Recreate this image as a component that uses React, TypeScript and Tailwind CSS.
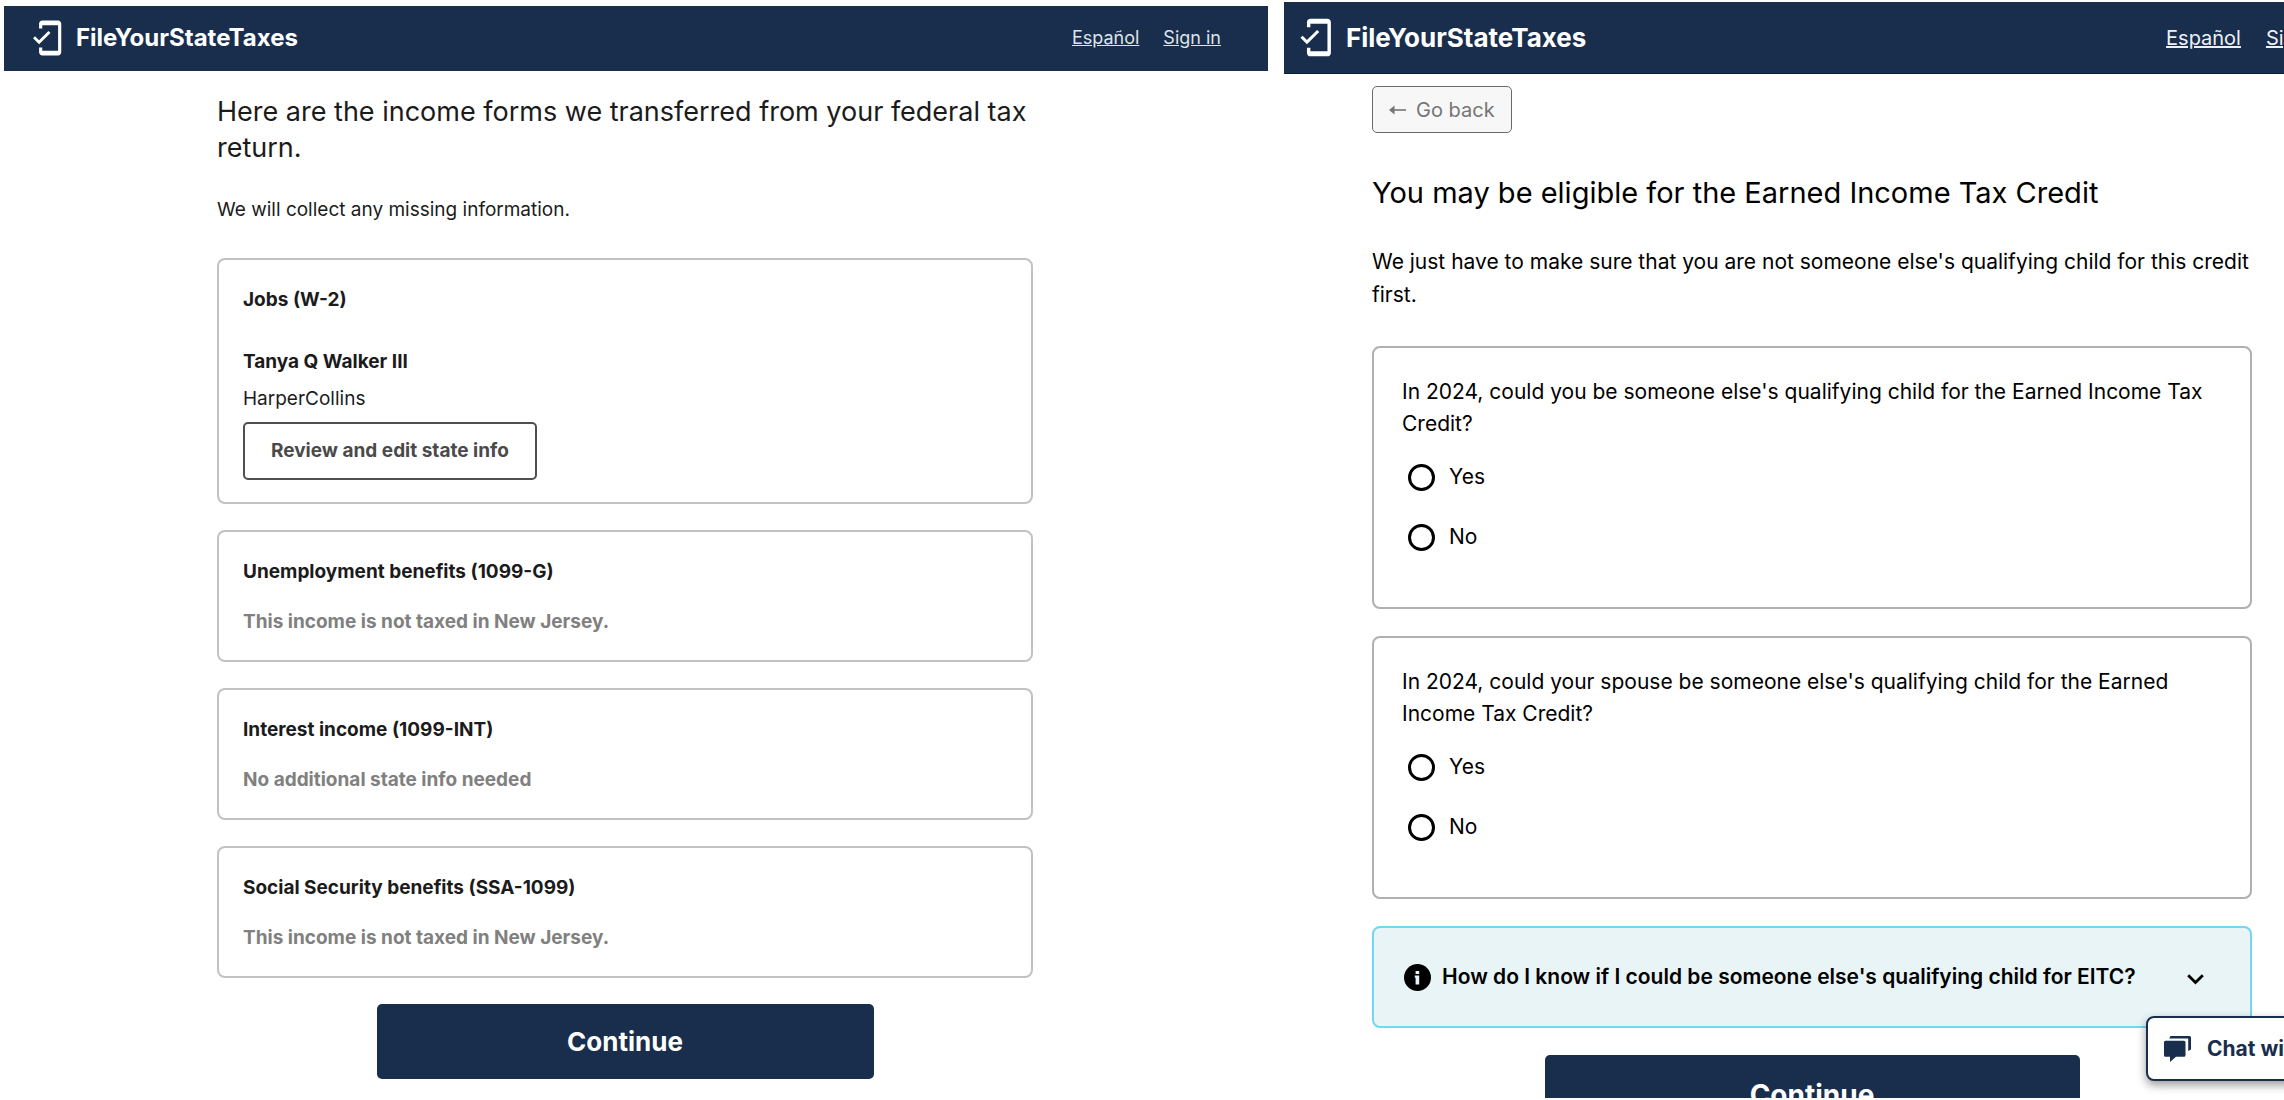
import { ReactNode } from 'react';
import { MdMobileFriendly } from 'react-icons/md';

interface IncomeForm {
  title: string;
  note: string;
}

const incomeForms: IncomeForm[] = [
  { title: 'Unemployment benefits (1099-G)', note: 'This income is not taxed in New Jersey.' },
  { title: 'Interest income (1099-INT)', note: 'No additional state info needed' },
  { title: 'Social Security benefits (SSA-1099)', note: 'This income is not taxed in New Jersey.' },
];

const ArrowLeft = () => (
  <svg width="17" height="12" viewBox="0 0 17 12" fill="none" aria-hidden="true">
    <path d="M3 6h14" stroke="currentColor" strokeWidth="1.6" />
    <path d="M0 6l5.500-4.500v9z" fill="currentColor" />
  </svg>
);

const InfoIcon = () => (
  <svg width="27" height="27" viewBox="0 0 27 27" className="shrink-0" aria-hidden="true">
    <circle cx="13.5" cy="13.5" r="13.5" fill="#000" />
    <path d="M11.600 7h3.600v3h-3.600zM10.800 11.600h4.400v9h-3.600v-6.800h-.8z" fill="#e8f4f6" />
  </svg>
);

const ChatIcon = () => (
  <svg width="27" height="26" viewBox="0 0 27 26" fill="#192e4d" className="shrink-0" aria-hidden="true">
    <path d="M1.500 4.700h18.500a1.500 1.500 0 0 1 1.500 1.500v13.100a1.500 1.500 0 0 1-1.500 1.500h-8L6 26v-5.200H1.500A1.500 1.500 0 0 1 0 19.300V6.200a1.500 1.500 0 0 1 1.500-1.500z" />
    <path d="M6.500 0H25.500A1.500 1.500 0 0 1 27 1.500V13.500L24.200 15V2.500H5.200z" />
  </svg>
);

interface QuestionProps {
  name: string;
  children: ReactNode;
}

const Question = ({ name, children }: QuestionProps) => (
  <fieldset className="mt-[27px] rounded-lg border-2 border-[#b0b0b0] px-7 pt-7 pb-[54px]">
    <legend className="float-left w-full text-[21px] leading-8">{children}</legend>
    <div className="clear-both flex flex-col gap-7 pt-[21px] pl-[6px]">
      {['Yes', 'No'].map((option) => (
        <label key={option} className="flex items-center gap-[14px] text-[21px] leading-8">
          <input
            type="radio"
            name={name}
            value={option}
            className="size-[27px] appearance-none rounded-full border-[3px] border-black bg-white checked:bg-[#192e4d]"
          />
          {option}
        </label>
      ))}
    </div>
  </fieldset>
);

const IncomeFormsScreen = () => (
  <section className="min-w-0 pt-[6px] text-[#1b1b1b]">
    <header className="flex h-[65px] items-center justify-between bg-[#192e4d] pr-[47px] pb-[2px] pl-6 text-white">
      <div className="flex items-center gap-[10px]">
        <MdMobileFriendly size={38} />
        <span className="text-[24px] leading-8 font-bold">FileYourStateTaxes</span>
      </div>
      <nav className="flex gap-6 text-[18px] leading-6 text-[#dfe3e8]">
        <a href="#" className="underline">Español</a>
        <a href="#" className="underline">Sign in</a>
      </nav>
    </header>

    <div className="pr-[22px]">
      <main className="mx-auto max-w-[816px]">
        <h1 className="mt-[23px] text-[27px] leading-9">
          Here are the income forms we transferred from your federal tax return.
        </h1>
        <p className="mt-[30px] text-[19px] leading-7">We will collect any missing information.</p>

        <div className="mt-[34px] rounded-lg border-2 border-[#c2c2c2] px-6 pt-[26px] pb-[22px]">
          <h2 className="text-[19px] leading-7 font-bold">Jobs (W-2)</h2>
          <h3 className="mt-[34px] text-[19px] leading-7 font-bold">Tanya Q Walker III</h3>
          <p className="mt-[9px] text-[19px] leading-7">HarperCollins</p>
          <button className="mt-[9px] block h-[58px] rounded-[5px] border-2 border-[#4f4f4f] px-[26px] text-[19px] font-bold text-[#4a4a4a]">
            Review and edit state info
          </button>
        </div>

        {incomeForms.map((form) => (
          <div key={form.title} className="mt-[26px] rounded-lg border-2 border-[#c2c2c2] px-6 pt-[26px] pb-6">
            <h2 className="text-[19px] leading-7 font-bold">{form.title}</h2>
            <p className="mt-[22px] text-[19px] leading-7 font-bold text-[#808080]">{form.note}</p>
          </div>
        ))}

        <button className="mx-auto mt-[26px] block h-[75px] w-full max-w-[497px] rounded-[5px] bg-[#192e4d] text-[26px] font-bold text-white">
          Continue
        </button>
      </main>
    </div>
  </section>
);

const EligibilityScreen = () => (
  <section className="relative min-w-0 overflow-hidden pt-[2px] text-black">
    {/* The page is wider than its pane, so its right edge is cut off */}
    <div className="-mr-14">
      <header className="flex h-[72px] items-center justify-between border-b border-[#0a1a3a] bg-[#192e4d] pr-[10px] pl-[11px] text-white">
        <div className="flex items-center gap-[10px]">
          <MdMobileFriendly size={41} />
          <span className="text-[26px] leading-8 font-bold">FileYourStateTaxes</span>
        </div>
        <nav className="flex gap-[25px] text-[20px] leading-6 text-[#eef0f3]">
          <a href="#" className="underline">Español</a>
          <a href="#" className="underline">Sign in</a>
        </nav>
      </header>

      <main className="mx-auto max-w-[880px]">
        <button className="mt-3 flex h-[47px] items-center gap-[10px] rounded-[5px] border border-[#6b6b6b] bg-[#f7f7f7] px-4 text-[20px] text-[#757575]">
          <ArrowLeft />
          Go back
        </button>
        <h1 className="mt-10 text-[29px] leading-10">You may be eligible for the Earned Income Tax Credit</h1>
        <p className="mt-8 text-[21px] leading-[33px]">
          We just have to make sure that you are not someone else's qualifying child for this credit first.
        </p>

        <div className="mt-[35px]">
          <Question name="self">
            In 2024, could you be someone else's qualifying child for the Earned Income Tax Credit?
          </Question>
          <Question name="spouse">
            In 2024, could your spouse be someone else's qualifying child for the Earned Income Tax Credit?
          </Question>
        </div>

        <button className="mt-[27px] flex h-[102px] w-full items-center rounded-lg border-2 border-[#73d7f0] bg-[#e8f4f6] pr-[46px] pl-[30px] text-left text-[21px] font-semibold">
          <InfoIcon />
          <span className="ml-[11px] flex-1">How do I know if I could be someone else's qualifying child for EITC?</span>
          <svg width="17" height="11" viewBox="0 0 17 11" fill="none" className="mt-1 shrink-0" aria-hidden="true">
            <path d="M1.200 1.200l7.300 7.300 7.300-7.300" stroke="#000" strokeWidth="2.800" />
          </svg>
        </button>

        <button className="mx-auto mt-[27px] block h-20 w-full max-w-[535px] rounded-[5px] bg-[#192e4d] text-[28px] font-bold text-white">
          Continue
        </button>
      </main>
    </div>

    <button className="absolute -right-14 bottom-[17px] flex h-[65px] w-[194px] items-center gap-4 rounded-lg border-2 border-[#192e4d] bg-white pl-4 text-[21px] font-bold whitespace-nowrap text-[#192e4d] shadow-[0_4px_10px_rgba(0,0,0,0.4)]">
      <ChatIcon />
      Chat with us
    </button>
  </section>
);

const App = () => (
  <div className="h-screen overflow-hidden bg-white pb-[2px] pl-1 font-[Inter,sans-serif]">
    <div className="grid h-full grid-cols-[1264fr_1000fr] gap-4">
      <IncomeFormsScreen />
      <EligibilityScreen />
    </div>
  </div>
);

export default App;
